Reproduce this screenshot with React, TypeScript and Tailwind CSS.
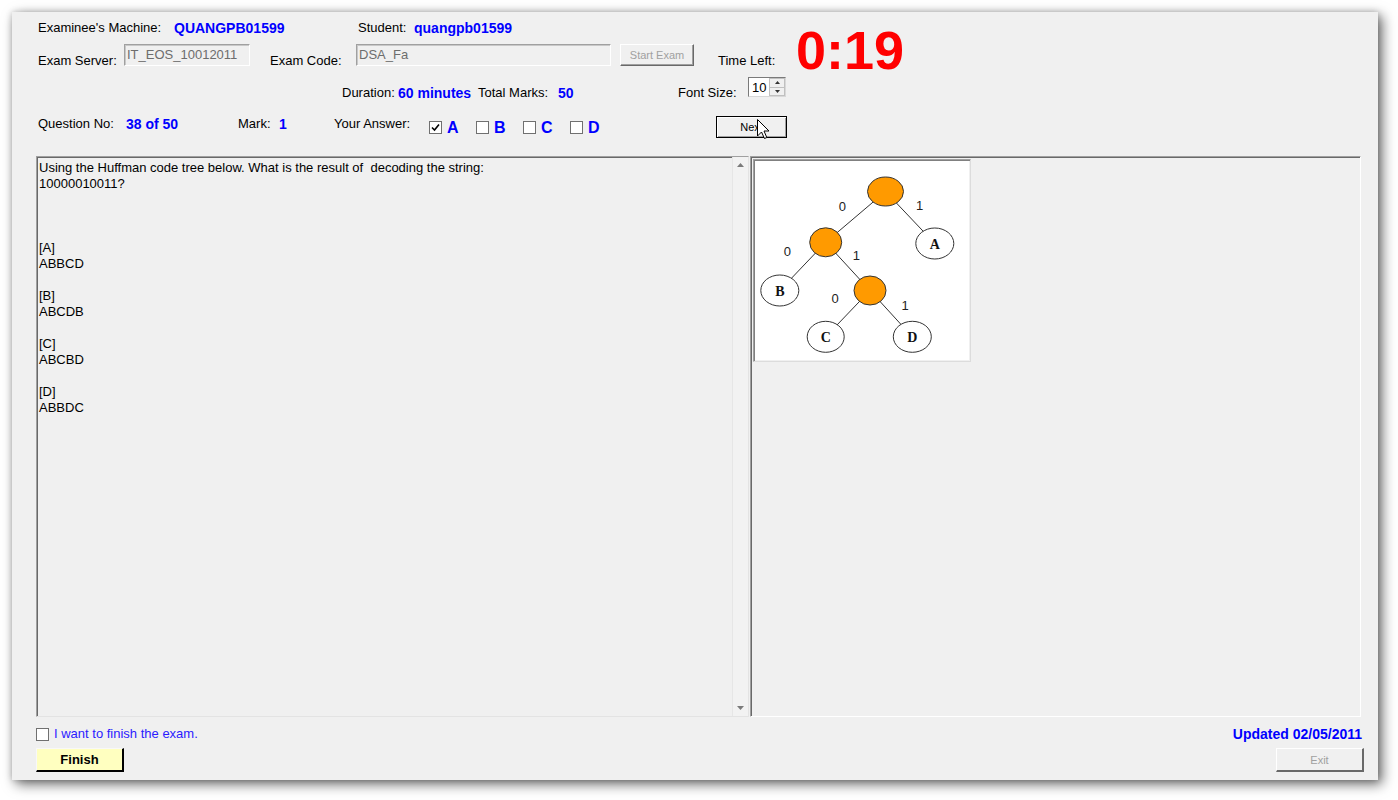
const Label = ({ children, className = "" }: { children: React.ReactNode; className?: string }) => (
	<span className={`shrink-0 whitespace-nowrap text-[13px] leading-[16px] text-black ${className}`}>{children}</span>
);

const Value = ({ children, className = "" }: { children: React.ReactNode; className?: string }) => (
	<span className={`shrink-0 whitespace-nowrap text-[14px] leading-[16px] font-bold text-[#0000ff] ${className}`}>{children}</span>
);

const CheckBox = ({ checked = false, className = "" }: { checked?: boolean; className?: string }) => (
	<span className={`shrink-0 flex items-center justify-center w-[13px] h-[13px] bg-white border border-[#707070] ${className}`}>
		{checked && (
			<svg width="9" height="9" viewBox="0 0 9 9">
				<path d="M1 4.5 L3.5 7 L8 1.5" fill="none" stroke="#000" strokeWidth="1.6" />
			</svg>
		)}
	</span>
);

const AnswerOption = ({ letter, checked = false }: { letter: string; checked?: boolean }) => (
	<div className="flex w-[47px] shrink-0">
		<CheckBox checked={checked} className="mt-[5px]" />
		<span className="ml-[5px] mt-[3px] text-[16px] leading-[18px] font-bold text-[#0000ff]">{letter}</span>
	</div>
);

const HuffmanTree = () => (
	<svg width="214" height="199" viewBox="0 0 214 199" className="block bg-white">
		<g stroke="#333" strokeWidth="1">
			<line x1="130.5" y1="30.5" x2="70.7" y2="81.3" />
			<line x1="130.5" y1="30.5" x2="179.8" y2="82.5" />
			<line x1="70.7" y1="81.3" x2="24.8" y2="129.5" />
			<line x1="70.7" y1="81.3" x2="115" y2="129.5" />
			<line x1="115" y1="129.5" x2="70.7" y2="175.8" />
			<line x1="115" y1="129.5" x2="157.3" y2="175.8" />
		</g>
		<g stroke="#333" strokeWidth="1">
			<ellipse cx="130.5" cy="30.5" rx="18" ry="14.5" fill="#ff9a00" />
			<ellipse cx="70.7" cy="81.3" rx="16" ry="14.5" fill="#ff9a00" />
			<ellipse cx="115" cy="129.5" rx="16" ry="14.5" fill="#ff9a00" />
			<ellipse cx="179.8" cy="82.5" rx="19" ry="15.5" fill="#fff" />
			<ellipse cx="24.8" cy="129.5" rx="19" ry="15.5" fill="#fff" />
			<ellipse cx="70.7" cy="175.8" rx="18.5" ry="15.5" fill="#fff" />
			<ellipse cx="157.3" cy="175.8" rx="19" ry="15.5" fill="#fff" />
		</g>
		<g fontFamily="'Liberation Serif', serif" fontWeight="700" fontSize="14" fill="#111" textAnchor="middle">
			<text x="179.8" y="87.5">A</text>
			<text x="24.8" y="134.5">B</text>
			<text x="70.7" y="180.8">C</text>
			<text x="157.3" y="180.8">D</text>
		</g>
		<g fontFamily="'Liberation Sans', Arial, sans-serif" fontSize="13" fill="#222" textAnchor="middle">
			<text x="87.3" y="50">0</text>
			<text x="164.7" y="48.5">1</text>
			<text x="32.3" y="94.5">0</text>
			<text x="101.3" y="99">1</text>
			<text x="80" y="141.5">0</text>
			<text x="150" y="148.5">1</text>
		</g>
	</svg>
);

const questionText = `Using the Huffman code tree below. What is the result of  decoding the string:
10000010011?



[A]
ABBCD

[B]
ABCDB

[C]
ABCBD

[D]
ABBDC`;

export default function App() {
	return (
		<div className="min-h-screen bg-white p-[12px] font-['Liberation_Sans',Arial,sans-serif] text-[13px] leading-[16px] text-black">
			<div className="w-[1366px] h-[768px] bg-[#f0f0f0] flex flex-col shadow-[4px_4px_12px_rgba(0,0,0,0.6),0_0_6px_rgba(0,0,0,0.18)]">
				{/* header: machine / student / server / code / timer */}
				<div className="flex">
					<div className="w-[784px] shrink-0 pl-[26px] pt-[8px]">
						<div className="flex h-[16px]">
							<Label className="w-[136px]">Examinee's Machine:</Label>
							<Value className="w-[184px]">QUANGPB01599</Value>
							<Label className="w-[56px]">Student:</Label>
							<Value>quangpb01599</Value>
						</div>
						<div className="flex h-[22px] mt-[8px]">
							<Label className="w-[86px] mt-[9px]">Exam Server:</Label>
							<div className="w-[126px] h-[22px] shrink-0 border border-[#a0a0a0] border-b-white border-r-white shadow-[inset_1px_1px_0_#c8c8c8] pl-[2px] pt-[2px] text-[13px] leading-[16px] text-[#6d6d6d]">
								IT_EOS_10012011
							</div>
							<Label className="w-[86px] ml-[20px] mt-[9px]">Exam Code:</Label>
							<div className="w-[255px] h-[22px] shrink-0 border border-[#a0a0a0] border-b-white border-r-white shadow-[inset_1px_1px_0_#c8c8c8] pl-[2px] pt-[2px] text-[13px] leading-[16px] text-[#6d6d6d]">
								DSA_Fa
							</div>
							<button className="ml-[9px] w-[74px] h-[22px] shrink-0 border border-white border-r-[#696969] border-b-[#696969] shadow-[inset_-1px_-1px_0_#a0a0a0] text-[11px] leading-[14px] text-[#a0a0a0]">
								Start Exam
							</button>
							<Label className="ml-[24px] mt-[9px]">Time Left:</Label>
						</div>
					</div>
					<div className="mt-[11px] h-[54px] text-[54px] leading-[54px] font-bold text-[#ff0000]">0:19</div>
				</div>

				{/* duration row */}
				<div className="flex h-[20px] pl-[330px]">
					<Label className="w-[56px] mt-[8px]">Duration:</Label>
					<Value className="w-[80px] mt-[8px]">60 minutes</Value>
					<Label className="w-[80px] mt-[8px]">Total Marks:</Label>
					<Value className="w-[120px] mt-[8px]">50</Value>
					<Label className="w-[70px] mt-[8px]">Font Size:</Label>
					<div className="relative w-[38px] h-[20px] shrink-0 bg-white border border-[#7a7a7a] border-b-[#d8d8d8] border-r-[#d8d8d8]">
						<span className="absolute left-[3px] top-[2px] text-[13px] leading-[16px]">10</span>
						<div className="absolute right-0 top-0 w-[16px] h-full flex flex-col">
							<div className="flex-1 flex items-center justify-center bg-[#f0f0f0] border border-[#c0c0c0]">
								<svg width="5" height="3" viewBox="0 0 5 3"><path d="M2.5 0 L5 3 L0 3 Z" fill="#333" /></svg>
							</div>
							<div className="flex-1 flex items-center justify-center bg-[#f0f0f0] border border-t-0 border-[#c0c0c0]">
								<svg width="5" height="3" viewBox="0 0 5 3"><path d="M0 0 L5 0 L2.5 3 Z" fill="#333" /></svg>
							</div>
						</div>
					</div>
				</div>

				{/* question row */}
				<div className="flex h-[22px] mt-[19px] pl-[26px]">
					<Label className="w-[88px]">Question No:</Label>
					<Value className="w-[112px]">38 of 50</Value>
					<Label className="w-[41px]">Mark:</Label>
					<Value className="w-[55px]">1</Value>
					<Label className="w-[95px]">Your Answer:</Label>
					<AnswerOption letter="A" checked />
					<AnswerOption letter="B" />
					<AnswerOption letter="C" />
					<AnswerOption letter="D" />
					<button className="relative ml-[99px] w-[71px] h-[22px] shrink-0 bg-[#f0f0f0] border border-black shadow-[inset_1px_1px_0_#fff,inset_-1px_-1px_0_#a0a0a0] text-[11px] leading-[14px] text-black">
						Next
						<svg className="absolute left-[40px] top-[2px]" width="13" height="21" viewBox="0 0 13 21">
							<path d="M0.5 0.5 L0.5 17 L4.5 13 L7.5 19.5 L9.8 18.5 L7 12 L12 12 Z" fill="#fff" stroke="#000" strokeWidth="1" strokeLinejoin="round" />
						</svg>
					</button>
				</div>

				{/* panels */}
				<div className="flex h-[561px] mt-[18px] pl-[24px]">
					<div className="flex w-[713px] shrink-0 border border-[#a0a0a0] border-b-[#e3e3e3] border-r-[#e3e3e3] shadow-[inset_1px_1px_0_#696969]">
						<div className="flex-1 pl-[2px] pt-[3px] whitespace-pre text-[13px] leading-[16px] text-black">{questionText}</div>
						<div className="w-[16px] shrink-0 flex flex-col justify-between items-center bg-[#f2f2f2] border-l border-[#e6e6e6] py-[6px]">
							<svg width="7" height="4" viewBox="0 0 7 4"><path d="M3.5 0 L7 4 L0 4 Z" fill="#7a7a7a" /></svg>
							<svg width="7" height="4" viewBox="0 0 7 4"><path d="M0 0 L7 0 L3.5 4 Z" fill="#7a7a7a" /></svg>
						</div>
					</div>
					<div className="w-[611px] shrink-0 ml-[1px] border border-[#a0a0a0] border-b-white border-r-white shadow-[inset_1px_1px_0_#696969] p-[2px]">
						<div className="w-fit border border-[#a0a0a0] border-b-[#dcdcdc] border-r-[#dcdcdc] shadow-[inset_1px_1px_0_#808080] p-[1px]">
							<HuffmanTree />
						</div>
					</div>
				</div>

				{/* finish row */}
				<div className="flex h-[16px] mt-[9px] pl-[24px] pr-[16px]">
					<CheckBox className="mt-[2px] border-[#8f8f8f]" />
					<span className="ml-[5px] text-[13px] leading-[16px] text-[#2b1bff]">I want to finish the exam.</span>
					<span className="ml-auto text-[14px] leading-[16px] font-bold text-[#0000ff]">Updated 02/05/2011</span>
				</div>
				<div className="flex h-[24px] mt-[6px] pl-[24px] pr-[14px]">
					<button className="w-[88px] h-[24px] bg-[#ffffc0] border border-[#f8f8f8] border-r-2 border-b-2 border-r-black border-b-black text-[13px] leading-[16px] font-bold text-black">
						Finish
					</button>
					<button className="ml-auto w-[88px] h-[24px] border border-white border-r-2 border-b-2 border-r-[#696969] border-b-[#696969] text-[11px] leading-[14px] text-[#a0a0a0]">
						Exit
					</button>
				</div>
			</div>
		</div>
	);
}
